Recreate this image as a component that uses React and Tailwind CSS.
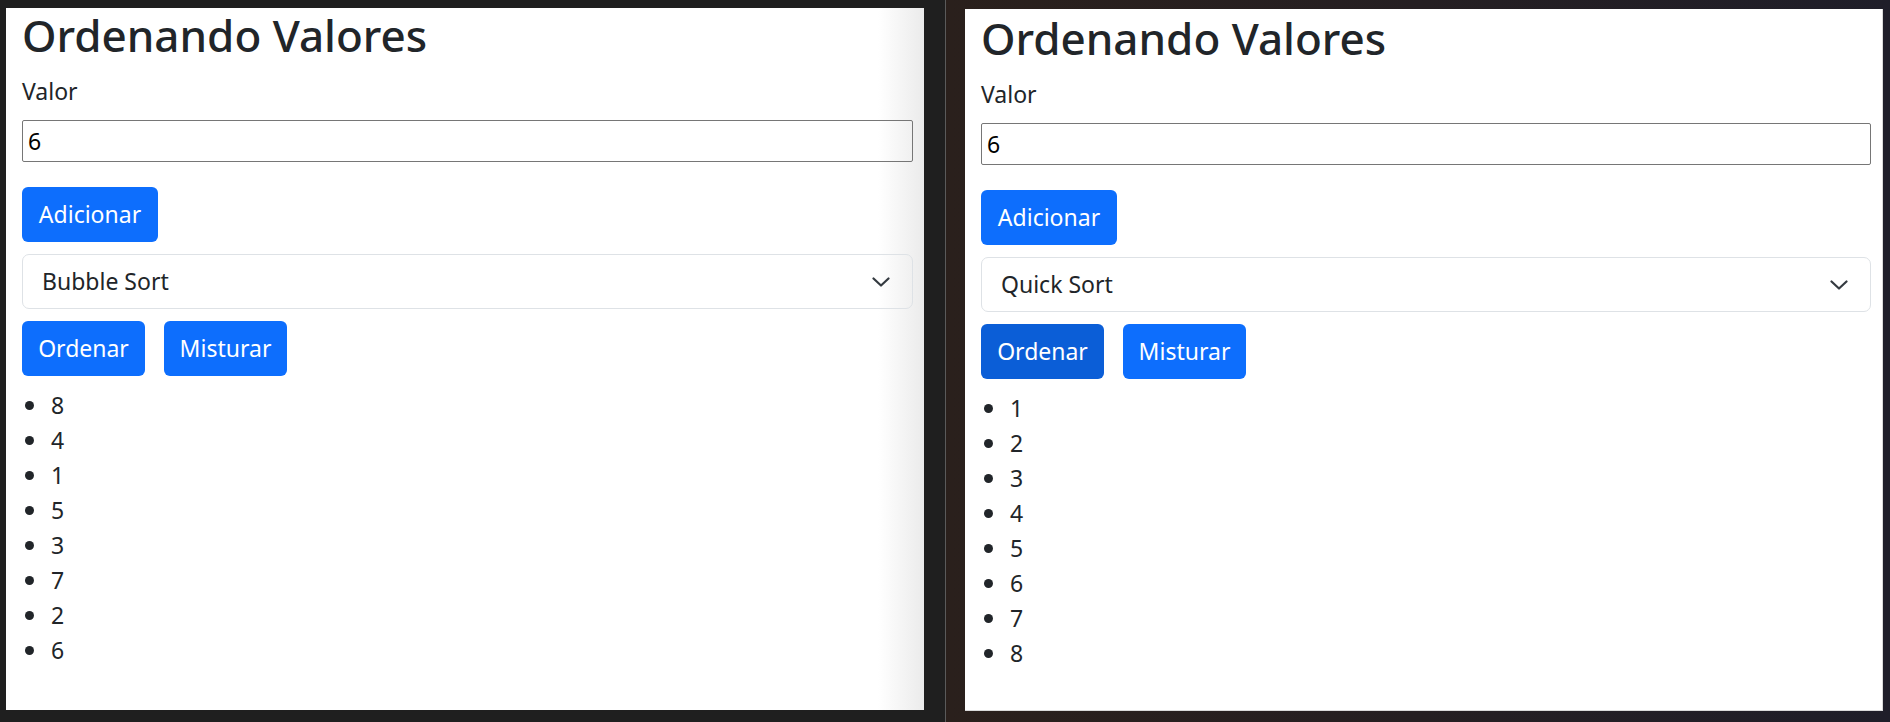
import React from "react";

const FONT = { fontFamily: '"Noto Sans", "Open Sans", sans-serif' };

function Chevron() {
  return (
    <svg width="18" height="10" viewBox="0 0 18 10" fill="none">
      <path
        d="M1.5 1.5 L9 8.5 L16.5 1.5"
        stroke="#343a40"
        strokeWidth="2.2"
        strokeLinecap="round"
        strokeLinejoin="round"
      />
    </svg>
  );
}

function Panel({ algorithm, values, pressed, lower, shaded }) {
  return (
    <div
      className={
        shaded
          ? "w-[918px] h-[702px] pl-[16px] pr-[11px] text-[#212529] bg-[linear-gradient(90deg,#ffffff_95%,#ebebeb_100%)]"
          : "w-[918px] h-[702px] pl-[16px] pr-[11px] text-[#212529] bg-white border-r border-b border-[#dadada]"
      }
      style={FONT}
    >
      <div className={lower ? "pt-[3px]" : "pt-0"}>
        <h1 className="text-[44px] leading-[54px] font-medium -mt-[1px] mb-[12px]">
          Ordenando Valores
        </h1>
        <label className="block text-[23px] leading-[35px] mb-[11px]">Valor</label>
        <input
          className="block w-full h-[42px] border border-[#767676] rounded-[2px] px-[5px] text-[23px] text-black outline-none"
          style={FONT}
          value="6"
          readOnly
        />
        <button className="mt-[25px] block w-[136px] h-[55px] rounded-[6px] bg-[#0d6efd] text-white text-[23px]">
          Adicionar
        </button>
        <div className="mt-[12px] h-[55px] w-full flex items-center justify-between border border-[#dee2e6] rounded-[7px] pl-[19px] pr-[22px] text-[23px]">
          <span>{algorithm}</span>
          <Chevron />
        </div>
        <div className="mt-[12px] flex gap-[19px]">
          <button
            className={
              pressed
                ? "w-[123px] h-[55px] rounded-[6px] bg-[#0b5ed7] text-white text-[23px]"
                : "w-[123px] h-[55px] rounded-[6px] bg-[#0d6efd] text-white text-[23px]"
            }
          >
            Ordenar
          </button>
          <button className="w-[123px] h-[55px] rounded-[6px] bg-[#0d6efd] text-white text-[23px]">
            Misturar
          </button>
        </div>
        <ul className="mt-[12px] text-[23px] leading-[35px]">
          {values.map((v) => (
            <li key={v} className="flex items-center">
              <span className="ml-[3px] mr-[17px] w-[9px] h-[9px] rounded-full bg-[#212529]" />
              {v}
            </li>
          ))}
        </ul>
      </div>
    </div>
  );
}

export default function App() {
  return (
    <div className="w-[1890px] h-[722px] flex bg-[#1f1f1f] overflow-hidden">
      <div className="w-[945px] shrink-0 pl-[6px] pt-[9px]">
        <Panel algorithm="Bubble Sort" values={[8, 4, 1, 5, 3, 7, 2, 6]} shaded />
      </div>
      <div className="w-[1px] shrink-0 bg-[#5a5a5a]" />
      <div className="flex-1 pl-[19px] pt-[9px] bg-[linear-gradient(90deg,#2a201c,#251f22_50%,#1f1e29)]">
        <Panel
          algorithm="Quick Sort"
          values={[1, 2, 3, 4, 5, 6, 7, 8]}
          pressed
          lower
        />
      </div>
    </div>
  );
}
